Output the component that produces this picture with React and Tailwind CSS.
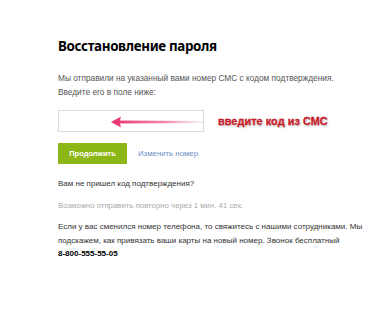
export default function App() {
  return (
    <div className="w-[374px] h-[320px] bg-white overflow-hidden" style={{ fontFamily: 'Arial, "Liberation Sans", sans-serif' }}>
      <div className="pl-[58px] pt-[36px]">
        <h1 className="text-[13.4px] font-bold text-black leading-[20px] tracking-[-0.35px]" style={{ fontFamily: '"Noto Sans", sans-serif' }}>
          Восстановление пароля
        </h1>
        <p className="mt-[15px] text-[8.3px] leading-[14px] text-[#555] whitespace-nowrap">
          Мы отправили на указанный вами номер СМС с кодом подтверждения.
          <br />
          Введите его в поле ниже:
        </p>

        <div className="mt-[11px] flex items-center">
          <div className="relative w-[146px] h-[22px] border border-[#dcdcdc] bg-white shrink-0">
            {/* pink arrow */}
            <svg className="absolute left-[50px] top-[4px]" width="96" height="14" viewBox="0 0 96 14">
              <defs>
                <linearGradient id="ar" x1="0" x2="1" y1="0" y2="0">
                  <stop offset="0" stopColor="#e8306c" />
                  <stop offset="0.6" stopColor="#ec6f98" stopOpacity="0.8" />
                  <stop offset="1" stopColor="#f5b5cb" stopOpacity="0.2" />
                </linearGradient>
              </defs>
              <path d="M2 7 L12 1.5 L11 5.5 L95 6 L95 8 L11 8.5 L12 12.5 Z" fill="url(#ar)" />
            </svg>
          </div>
          <span
            className="ml-[14px] text-[10.8px] font-bold text-[#d4202c] tracking-[0.1px] whitespace-nowrap"
            style={{ WebkitTextStroke: '0.3px #b0101a', textShadow: '0 0 2px #fff, 1px 1px 2px rgba(0,0,0,0.35)' }}
          >
            введите код из СМС
          </span>
        </div>

        <div className="mt-[11px] flex items-center">
          <button className="w-[69px] h-[21px] bg-[#8cb516] text-white text-[7.5px] font-bold rounded-[1px]">
            Продолжить
          </button>
          <span className="ml-[11px] text-[7.8px] text-[#6a8fc7]">Изменить номер</span>
        </div>

        <p className="mt-[14px] text-[8px] text-[#333] leading-[12px]">Вам не пришел код подтверждения?</p>
        <p className="mt-[10px] text-[7.8px] text-[#aaa] leading-[12px]">Возможно отправить повторно через 1 мин. 41 сек.</p>

        <p className="mt-[8px] text-[8px] text-[#333] leading-[13.5px] whitespace-nowrap">
          Если у вас сменился номер телефона, то свяжитесь с нашими сотрудниками. Мы
          <br />
          подскажем, как привязать ваши карты на новый номер. Звонок бесплатный
          <br />
          <span className="font-bold text-black">8-800-555-55-05</span>
        </p>
      </div>
    </div>
  )
}
